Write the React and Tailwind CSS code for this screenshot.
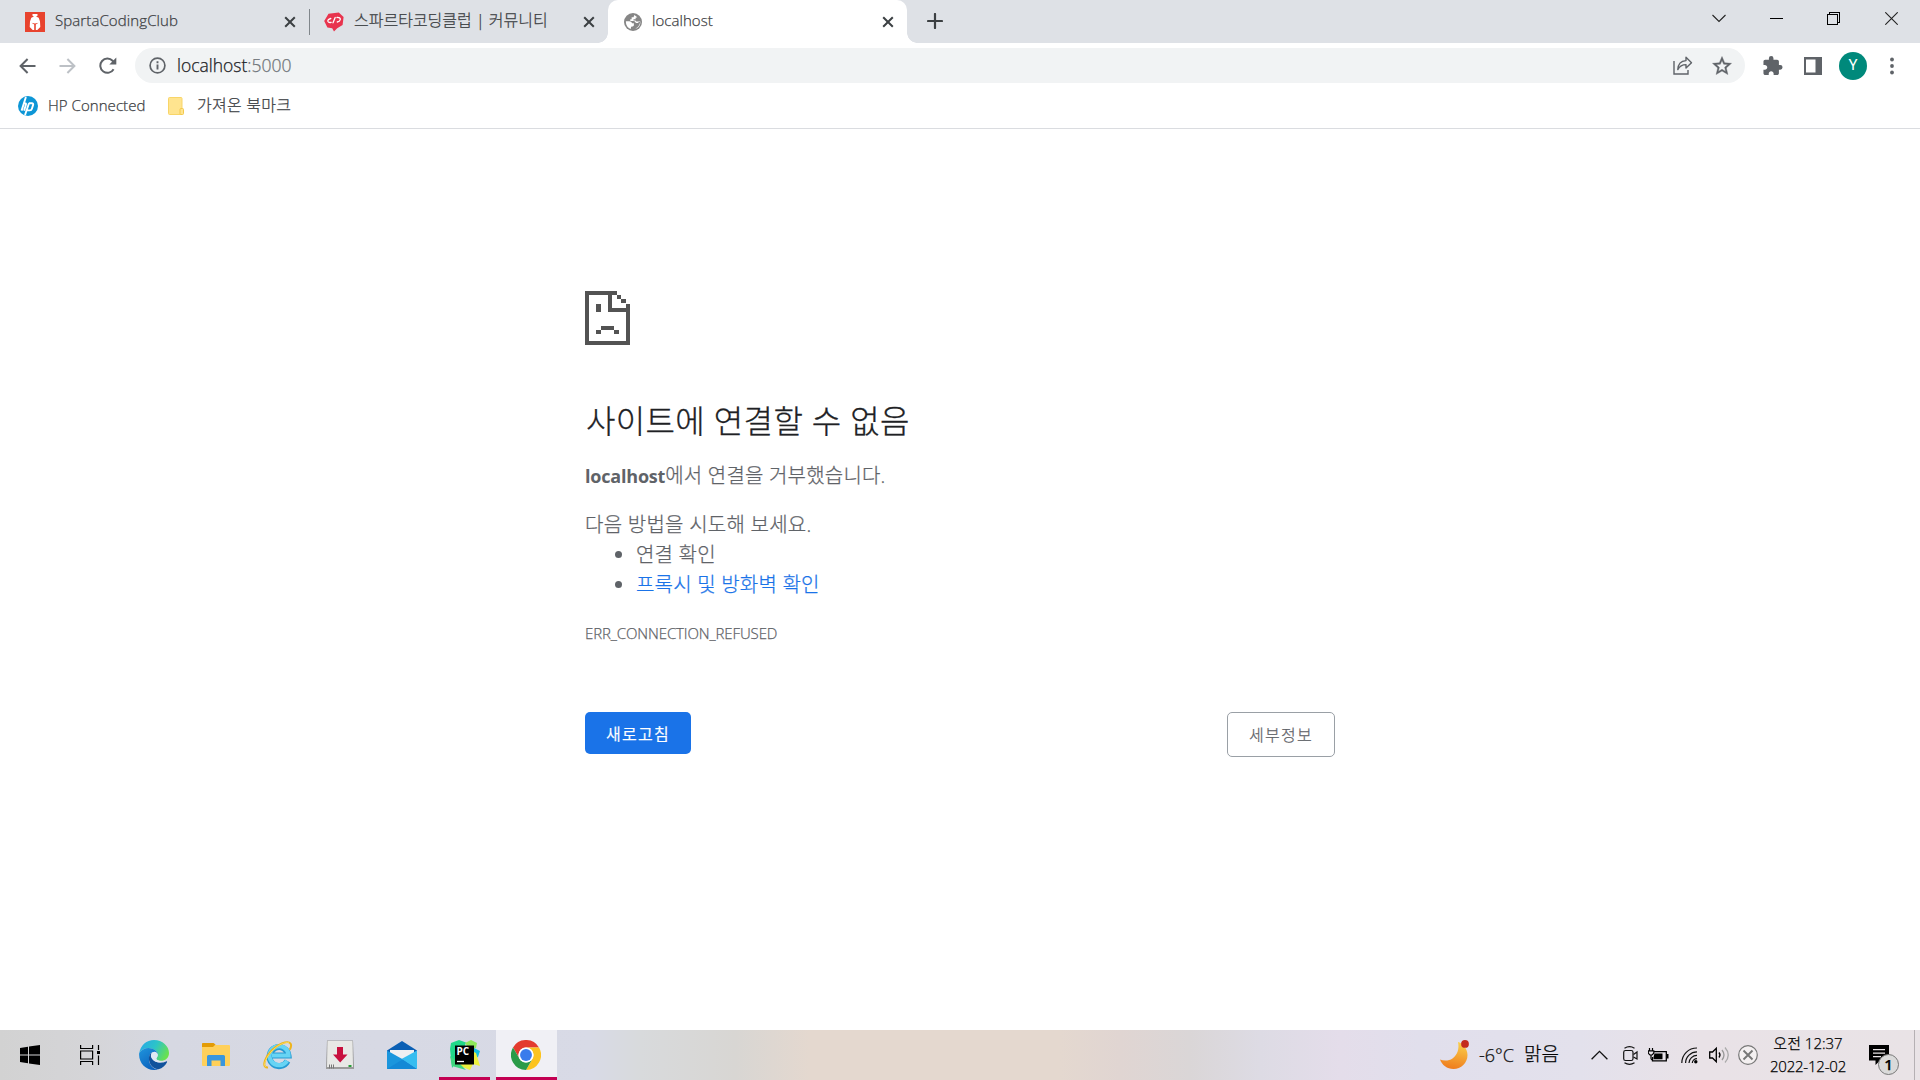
const FONT = 'font-["Open_Sans","Noto_Sans_CJK_KR",sans-serif]';

const CloseX = () => (
  <svg width="12" height="12" viewBox="0 0 12 12" className="shrink-0">
    <path d="M1.2 1.2 10.8 10.8M10.8 1.2 1.2 10.8" stroke="#3c4043" strokeWidth="2" />
  </svg>
);

const SpartaIcon = () => (
  <svg width="20" height="20" viewBox="0 0 20 20" className="shrink-0">
    <rect width="20" height="20" fill="#e8432e" />
    <path d="M7.500 2h5v1.800L11 4.500l2.700 1.300L15 9.500l.3 5.500-3 3h-1.500v-5.500l2.700-1.800-3.500.8-3.500-.8 2.700 1.800V18H7.700l-3-3L5 9.500l1.300-3.700L9 4.500l-1.500-.7z" fill="#fff" />
  </svg>
);

const CommunityIcon = () => (
  <svg width="20" height="20" viewBox="0 0 20 20" className="shrink-0">
    <path d="M4.500 1.800 14.800.4 19.600 5l-1 8-5.400 3.200L10 19.600l-1.800-3.400-4.800-.8L.2 9z" fill="#e8344e" />
    <path d="M6.800 6.500Q3.200 7.500 4 9.500q.8 1.500 3.200.8M13 5.500q3.500-.3 3.300 2-.3 2-3 2.500M11.200 5.500 9 10.800" stroke="#fff" strokeWidth="1.300" fill="none" strokeLinecap="round" />
  </svg>
);

const Globe = () => (
  <svg width="18" height="18" viewBox="2 2 20 20" className="shrink-0">
    <circle cx="12" cy="12" r="10" fill="#868686" />
    <path d="M4.100 11.200h3.600c1.700 0 3 .8 3.200 2.300H13v1.800c0 .8-.6 1.500-1.500 1.600l-1.600.4-.4 2.500C6.600 18.800 4 16 4.100 11.200zM13.500 4.200 12.600 6.800H10.500v2.200H9v2h3.500c1.500 0 2 1 2.700 2.200h2.300l1-1.200h1.400c-.3 2.700-1.700 5.200-4.500 6.900l-.5.200.2.500C19 18 20.400 15 20.200 11.500h-4.500l-1-1.200h-2.200V8.900h2.400V7.200l1.900-.4z" fill="#fff" />
  </svg>
);

function Tab({ icon, title, titleClass, closeClass, className }) {
  return (
    <div className={"flex h-[43px] items-center " + className}>
      {icon}
      <span className={"whitespace-nowrap text-[#3c4043] " + titleClass}>{title}</span>
      <span className={"ml-auto flex " + closeClass}><CloseX /></span>
    </div>
  );
}

function TabStrip() {
  return (
    <div className="flex h-[43px] bg-[#dee1e6]">
      <Tab icon={<SpartaIcon />} title="SpartaCodingClub" className="w-[309px] pl-[25px]"
        titleClass="ml-[10px] -mt-[2px] text-[15px] tracking-[0.1px]" closeClass="mr-[13px]" />
      <div className="mt-[9px] h-[26px] w-px bg-[#80868b]" />
      <Tab icon={<CommunityIcon />} title="스파르타코딩클럽 | 커뮤니티" className="w-[298px] pl-[14px]"
        titleClass="ml-[10px] -mt-[4px] text-[16px]" closeClass="mr-[13px]" />
      <div className="flex w-[299px] bg-[#dee1e6]">
        <div className="relative flex w-full rounded-t-[10px] bg-white">
          <div className="absolute bottom-0 -left-[10px] size-[10px] bg-[radial-gradient(circle_at_0_0,transparent_9.5px,white_10px)]" />
          <div className="absolute -right-[10px] bottom-0 size-[10px] bg-[radial-gradient(circle_at_100%_0,transparent_9.5px,white_10px)]" />
          <Tab icon={<Globe />} title="localhost" className="w-full pl-[16px]"
            titleClass="ml-[10px] -mt-[2px] text-[15px] tracking-[0.05px]" closeClass="mr-[13px]" />
        </div>
      </div>
      <svg width="16" height="16" viewBox="0 0 16 16" className="mt-[13px] ml-[20px]">
        <path d="M8 1v14M1 8h14" stroke="#3c4043" strokeWidth="2.200" strokeLinecap="round" />
      </svg>
      <div className="ml-auto flex">
        <svg width="14" height="9" viewBox="0 0 14 9" className="mt-[14px] mr-[44px]">
          <path d="M.5 1 7 7.500 13.500 1" stroke="#222" strokeWidth="1.100" fill="none" />
        </svg>
        <div className="mt-[18px] mr-[44px] h-px w-[13px] bg-black" />
        <svg width="13" height="13" viewBox="0 0 13 13" className="mt-[12px] mr-[45px]" shapeRendering="crispEdges">
          <path d="M.5 2.500h10v10h-10zM2.500 2.500v-2h10v10h-2" stroke="#000" fill="none" />
        </svg>
        <svg width="13" height="13" viewBox="0 0 13 13" className="mt-[12px] mr-[22px]">
          <path d="M.3.3 12.700 12.700M12.700.3.3 12.700" stroke="#222" strokeWidth="1.100" />
        </svg>
      </div>
    </div>
  );
}

function Toolbar() {
  return (
    <div className="flex h-[45px] items-center bg-white pl-[19px]">
      <svg width="17" height="16" viewBox="0 0 17 16">
        <path d="M16.500 8H2M8.600 1 1.600 8l7 7" stroke="#5f6368" strokeWidth="2" fill="none" />
      </svg>
      <svg width="17" height="16" viewBox="0 0 17 16" className="ml-[23px]">
        <path d="M.5 8H15M8.400 1l7 7-7 7" stroke="#bdc1c6" strokeWidth="2" fill="none" />
      </svg>
      <svg width="18" height="17" viewBox="0 0 18 17" className="ml-[23px]">
        <path d="M14.600 12.200A7.100 7.100 0 1 1 13.600 3.800L15 5.200" stroke="#5f6368" strokeWidth="2" fill="none" />
        <path d="M17.300.6v7H10.300z" fill="#5f6368" />
      </svg>
      <div className="ml-[18px] flex h-[35px] w-[1610px] items-center rounded-full bg-[#f1f3f4] pr-[13px] pl-[14px]">
        <svg width="17" height="17" viewBox="0 0 17 17">
          <circle cx="8.500" cy="8.500" r="7.400" stroke="#5f6368" strokeWidth="1.700" fill="none" />
          <path d="M8.500 7.400v5M8.500 4.300v1.900" stroke="#5f6368" strokeWidth="1.900" />
        </svg>
        <span className="ml-[11px] text-[17.5px] text-[#202124]">localhost<span className="text-[#70757a]">:5000</span></span>
        <svg width="20" height="19" viewBox="0 0 20 19" className="ml-auto">
          <path d="M1 5v13h14v-4" stroke="#5f6368" strokeWidth="1.400" fill="none" />
          <path d="M4.800 13.600C5 8.500 8 5 13 4.600V1.200l5.500 5.500-5.500 5.400V8.600c-3.800 0-6.500 1.800-8.200 5z" stroke="#5f6368" strokeWidth="1.400" fill="none" strokeLinejoin="round" />
        </svg>
        <svg width="20" height="20" viewBox="1.500 1.500 21 21" className="ml-[19px]">
          <path d="M22 9.240l-7.190-.62L12 2 9.190 8.630 2 9.240l5.460 4.730L5.820 21 12 17.270 18.180 21l-1.630-7.030L22 9.240zM12 15.400l-3.760 2.270 1-4.280-3.320-2.880 4.380-.38L12 6.100l1.710 4.040 4.380.38-3.320 2.880 1 4.280L12 15.400z" fill="#5f6368" stroke="#5f6368" strokeWidth=".4" />
        </svg>
      </div>
      <svg width="20" height="20" viewBox="1.500 1 22 22" className="ml-[18px]">
        <path d="M20.500 11H19V7c0-1.100-.9-2-2-2h-4V3.500a2.500 2.500 0 0 0-5 0V5H4c-1.100 0-1.990.9-1.990 2v3.800H3.500c1.490 0 2.700 1.210 2.700 2.700s-1.210 2.700-2.700 2.700H2V20c0 1.100.9 2 2 2h3.800v-1.500c0-1.490 1.210-2.700 2.700-2.700s2.700 1.210 2.700 2.700V22H17c1.100 0 2-.9 2-2v-4h1.500a2.500 2.500 0 0 0 0-5z" fill="#5f6368" />
      </svg>
      <svg width="18" height="18" viewBox="0 0 18 18" className="ml-[21px]">
        <path d="M0 0h18v18H0zM2 2.500v13h9.500v-13z" fill="#5f6368" fillRule="evenodd" />
      </svg>
      <div className="ml-[17px] flex size-[28px] items-center justify-center rounded-full bg-[#00897b] font-[Roboto] text-[15px] font-normal text-white [-webkit-text-stroke:0px]">Y</div>
      <svg width="4" height="18" viewBox="0 0 4 18" className="ml-[23px]">
        <circle cx="2" cy="2.500" r="1.900" fill="#5f6368" /><circle cx="2" cy="9" r="1.900" fill="#5f6368" /><circle cx="2" cy="15.500" r="1.900" fill="#5f6368" />
      </svg>
    </div>
  );
}

function Bookmarks() {
  return (
    <div className="flex h-[41px] items-center border-b border-[#dadce0] bg-white pb-[5px] pl-[18px] text-[#3c4043]">
      <svg width="20" height="20" viewBox="0 0 20 20">
        <circle cx="10" cy="10" r="10" fill="#0d96d6" />
        <path d="M7.900 1 3.600 14.600M5.300 7.200H6.900Q8.400 7.200 7.900 8.800L6.100 14.600M11 7.300 7 19M10.800 7.300h3.100q1.700 0 1.200 1.600l-1.200 3.900q-.5 1.600-2 1.600H9.200" stroke="#fff" strokeWidth="1.900" fill="none" />
      </svg>
      <span className="ml-[10px] w-[100px] text-[15px] tracking-[0.05px] whitespace-nowrap">HP Connected</span>
      <svg width="16" height="18" viewBox="0 0 16 18" className="ml-[20px]">
        <rect x=".5" y=".5" width="13.500" height="17" rx="1" fill="#ffe48f" stroke="#f8d568" />
        <rect x="12" y="11.500" width="3.500" height="6" rx="1" fill="#ffe48f" stroke="#f3c94d" />
      </svg>
      <span className="-mt-px ml-[13px] text-[16px] tracking-[0.25px]">가져온 북마크</span>
    </div>
  );
}

function ErrorPage() {
  return (
    <main className="h-[901px] bg-white pt-[162px]">
      <div className="mx-auto w-[750px] text-[#5f6368]">
        <svg width="45" height="54" viewBox="0 0 45 54" shapeRendering="crispEdges" fill="#535353">
          <path d="M0 0h32v4H4v46h37V21H23V4h4v13h14v-4h4v41H0z" />
          <path d="M32 4h4v4h-4zM36 8h5v4h-5zM11 13h5v8h-5zM16 35h13v4H16zM11 39h5v4h-5zM29 39h5v4h-5z" />
        </svg>
        <h1 className="mt-[56px] ml-px h-[40px] text-[32px] leading-[40px] font-light tracking-[0.35px] text-[#202124] [-webkit-text-stroke:0.3px]">사이트에 연결할 수 없음</h1>
        <p className="mt-[20px] flex h-[30px] text-[20px] leading-[30px] tracking-[0.2px]">
          <strong className="text-[18px] font-bold tracking-[-0.2px] [-webkit-text-stroke:0px]">localhost</strong>
          <span>에서 연결을 거부했습니다.</span>
        </p>
        <p className="mt-[19px] h-[30px] text-[20px] leading-[30px] tracking-[0.25px]">다음 방법을 시도해 보세요.</p>
        <ul className="list-disc pl-[51px] text-[20px] leading-[30px] tracking-[0.2px]">
          <li>연결 확인</li>
          <li><a className="text-[#1a73e8]">프록시 및 방화벽 확인</a></li>
        </ul>
        <p className="mt-[18px] text-[15px] leading-[30px] tracking-[-0.12px]">ERR_CONNECTION_REFUSED</p>
        <div className="mt-[64px] flex items-start justify-between">
          <button className="h-[42px] w-[106px] rounded-[5px] bg-[#1a73e8] pt-[2px] text-[16px] font-[350] tracking-[1.3px] text-white">새로고침</button>
          <button className="h-[45px] w-[108px] rounded-[5px] border border-[#9aa0a6] text-[16px] tracking-[1.3px]">세부정보</button>
        </div>
      </div>
    </main>
  );
}

const WindowsLogo = () => (
  <svg width="20" height="20" viewBox="0 0 20 20">
    <path d="M0 2.900 8 1.800V9.500H0zM9 1.600 20 0v9.500H9zM0 10.500h8v7.700L0 17.100zM9 10.500h11V20L9 18.400z" />
  </svg>
);

const TaskView = () => (
  <svg width="20" height="20" viewBox="0 0 20 20" fill="none" stroke="#000" strokeWidth="1.200">
    <path d="M.6 0v3.500h12V0M.6 20v-3.500h12V20M.6 6h12v8h-12zM18.500 0v5M18.500 10.500V20" />
    <path d="M17 6h3v3h-3z" fill="#000" stroke="none" />
  </svg>
);

const Edge = () => (
  <svg width="30" height="30" viewBox="0 0 30 30">
    <defs>
      <linearGradient id="e1" x1="0" y1=".2" x2="1" y2=".6"><stop offset="0" stopColor="#29a9e6" /><stop offset=".5" stopColor="#2cc4c8" /><stop offset="1" stopColor="#6be24b" /></linearGradient>
      <linearGradient id="e2" x1="0" y1="0" x2=".6" y2="1"><stop offset="0" stopColor="#1f95dd" /><stop offset="1" stopColor="#0c62bd" /></linearGradient>
    </defs>
    <path d="M.3 13C1.500 5.300 7.600 0 15 0c8.500 0 15 6.200 15 13 0 5-3.800 7.800-8 7.800-3.500 0-5-1.200-4.700-2.300.5-1 1.500-1.700 1.500-3.700C18.800 11 14 8 9.500 8 5.500 8 2 10 .3 13z" fill="url(#e1)" />
    <path d="M.2 13C2 10 5.500 8 9.500 8c5 0 9.100 3 9.300 6.500C18 12.800 16.500 12 15 12c-3 0-5 3-5 7 0 6 4 10 9 10.300C17.500 30 16 30 15 30 6 30-.8 22 .2 13z" fill="url(#e2)" />
    <path d="M12.500 13c-2 1-3 4-2.500 7 1 6 5 9 9.500 9.300 4-1 7-3.700 8.500-7 .3-.8-.2-1.200-.9-.9C20 24.700 10.500 21 12.500 13z" fill="#10529c" />
    <path d="M14.800 11.900c-3 .6-3.600 4-2 6.600 2.200 3.700 8 4.800 13.200 3.100-1.500-.2-6.400-.4-8.300-2.200-1-1 .9-1.900 1.100-4.300 0-1.900-1.900-3.600-4-3.200z" fill="#dfe8f4" />
  </svg>
);

const Explorer = () => (
  <svg width="28" height="24" viewBox="0 0 28 24">
    <path d="M0 1q0-1 1-1h10.500l2 2H27q1 0 1 1v19q0 1-1 1H1q-1 0-1-1z" fill="#ffd05a" />
    <path d="M0 1q0-1 1-1h10.500l2 1.500-2.500 2.500H0z" fill="#e39b05" />
    <path d="M5 23V13.500q0-1.500 1.500-1.500h15q1.500 0 1.500 1.500V23h-4.500v-5.500h-9V23z" fill="#3a96dd" />
  </svg>
);

const InternetExplorer = () => (
  <svg width="30" height="30" viewBox="0 0 30 30" fill="none">
    <path d="M24.500 21A9.500 9.500 0 1 1 25.500 15.500H9" stroke="#279bd3" strokeWidth="6" />
    <path d="M24 20.800A9.500 9.500 0 1 1 25.500 15.500H9" stroke="#67d4f4" strokeWidth="4.200" />
    <path d="M5 27.500C-1 28 .7 20 7 12.500 14 4 25 0 27.500 3.500c1 1.500.5 4-.8 6.200" stroke="#eeb41c" strokeWidth="2" />
    <path d="M3 27C0 26 2 19 8 12 14 5 22.500 1.500 26 2.800" stroke="#fbdc5c" strokeWidth="1" />
  </svg>
);

const Installer = () => (
  <svg width="28" height="30" viewBox="0 0 28 30">
    <path d="M1 .5h26l1 26.500v2H0v-2z" fill="#9b9b9b" />
    <path d="M1.500 1h25l.5 26H1z" fill="#e8e8e6" />
    <path d="M11 7h6v7.500h4.500L14.200 22.500 7 14.500h4z" fill="#c8103e" />
    <path d="M3.500 24.500v4M5.500 24.500v4M7.500 24.500v4" stroke="#777" />
    <rect x="22.500" y="25" width="3" height="2" fill="#2a9d3a" />
  </svg>
);

const Mail = () => (
  <svg width="30" height="28" viewBox="0 0 30 28">
    <path d="M0 9.500 15 0l15 9.500v4H0z" fill="#0a5fb4" />
    <path d="M3 9h24v11H3z" fill="#f0f0f2" />
    <path d="M0 9.500 17 19l13 9H0z" fill="#1b96dd" />
    <path d="M30 9.500V28L14.500 18z" fill="#37bdf0" />
    <path d="M0 28 15.500 18.500 30 28z" fill="#1489d6" />
  </svg>
);

const PyCharm = () => (
  <svg width="30" height="30" viewBox="0 0 30 30">
    <path d="M9 0 16 2.500 12 14 2 28 0 9 1 3z" fill="#21d789" />
    <path d="M15 3 21 0 27 3 26 8 20 10z" fill="#8ee85a" />
    <path d="M24 8 30 11 28 17 22 20z" fill="#15bfe3" />
    <path d="M20 10 26 13 30 26 23 24 20 30 10 26z" fill="#ecf03e" />
    <path d="M0 16 8 22 16 30 2 26z" fill="#3fd67f" />
    <rect x="5" y="5.500" width="19" height="19" fill="#000" />
    <text x="6.500" y="14.800" fontFamily="Open Sans" fontWeight="700" fontSize="10" fill="#fff">PC</text>
    <path d="M7 21.500h7" stroke="#fff" strokeWidth="1.300" />
  </svg>
);

const Chrome = () => (
  <svg width="30" height="30" viewBox="0 0 48 48">
    <path d="M3.200 12A24 24 0 0 1 44.800 12H24A12 12 0 0 0 13.600 30z" fill="#e33b2e" />
    <path d="M44.800 12A24 24 0 0 1 24 48L34.400 30A12 12 0 0 0 24 12z" fill="#fcc31e" />
    <path d="M3.200 12A24 24 0 0 0 24 48L34.400 30A12 12 0 0 1 13.600 30z" fill="#2a9b48" />
    <circle cx="24" cy="24" r="12" fill="#fff" />
    <circle cx="24" cy="24" r="9.500" fill="#3a7cec" />
  </svg>
);

const PINNED = [Edge, Explorer, InternetExplorer, Installer, Mail];

function Tray() {
  return (
    <div className="ml-auto flex h-[50px] items-center">
      <svg width="29" height="30" viewBox="0 0 29 30">
        <defs><linearGradient id="moon" x1=".7" y1="0" x2=".5" y2="1"><stop offset="0" stopColor="#fad04a" /><stop offset="1" stopColor="#ef7d1e" /></linearGradient></defs>
        <path d="M18 2c4 1 9.500 6 9.500 13 0 8-6.500 14-14 14C7 29 2 25 0 19.500c3.500 1.500 9 1.500 12.500-1C17.500 15 19.500 8.500 18 2z" fill="url(#moon)" />
        <circle cx="25" cy="3.900" r="3.900" fill="#c42b1c" />
      </svg>
      <span className="ml-[10px] w-[45px] text-[18px] whitespace-nowrap text-[#111]">-6°C</span>
      <span className="-mt-px w-[37px] text-[19px] text-black">맑음</span>
      <svg width="17" height="10" viewBox="0 0 17 10" className="ml-[30px]">
        <path d="M.6 9.200 8.500 1.300l7.900 7.900" stroke="#111" strokeWidth="1.300" fill="none" />
      </svg>
      <svg width="15" height="19" viewBox="0 0 15 19" className="ml-[15px]" fill="none" stroke="#111" strokeWidth="1.200">
        <rect x=".7" y="4.500" width="9.300" height="10" rx="1.800" />
        <path d="M10.500 8.500 14 6v7l-3.500-2M1.500 2.200Q6.500-.8 11.500 2.200M1.500 16.800q5 3 10 0" />
      </svg>
      <svg width="21" height="15" viewBox="0 0 21 15" className="ml-[10px]">
        <path d="M6 3.700h12.300v9.100H4.500V9" fill="none" stroke="#000" strokeWidth="1.300" />
        <path d="M6.500 5.500h8v5.700h-9V9z" fill="#000" /><path d="M19 6h1.500v4.500H19z" />
        <path d="M1.500 0v2.500M4.500 0v2.500M.3 2.800h5.500v2.500L4 7H2L.3 5.300zM3 7v3.500q0 1.500 2 1.500" fill="none" stroke="#000" strokeWidth="1.200" />
      </svg>
      <svg width="17" height="17" viewBox="0 0 17 17" className="ml-[12px]" fill="none" stroke="#111" strokeWidth="1.200">
        <path d="M.8 16C.8 7.500 7.500 1 16 1M4.600 16C4.600 9.800 9.800 4.800 16 4.800M8 16c0-4.200 3.800-7.700 8-7.700M11.300 16c0-2.400 2.300-4.400 4.700-4.400" />
        <circle cx="14.800" cy="14.800" r="1.700" fill="#000" stroke="none" />
      </svg>
      <svg width="21" height="18" viewBox="0 0 21 18" className="ml-[11px]" fill="none" strokeWidth="1.300">
        <path d="M.7 6h2.800L7.300 2.200v13.600L3.500 12H.7z" stroke="#000" />
        <path d="M10 6.500q2 2.500 0 5" stroke="#000" /><path d="M13 4q4 5 0 10" stroke="#999" /><path d="M16 1.500q6.500 7.500 0 15" stroke="#aaa" />
      </svg>
      <svg width="20" height="20" viewBox="0 0 20 20" className="ml-[8px]" fill="none">
        <circle cx="10" cy="10" r="9.300" stroke="#777" strokeWidth="1.200" fill="#f4f0f1" />
        <path d="M5.500 5.500l9 9M14.500 5.500l-9 9" stroke="#777" strokeWidth="1.900" />
      </svg>
      <div className="ml-[8px] flex w-[84px] flex-col items-center text-[15px] leading-[23px] text-black">
        <span className="-mt-px">오전 12:37</span>
        <span className="tracking-[-0.2px]">2022-12-02</span>
      </div>
      <div className="relative ml-[19px] h-[20px] w-[20px]">
        <svg width="20" height="20" viewBox="0 0 20 20">
          <path d="M0 0h20v15.500H11L6.500 20v-4.500H0z" /><path d="M4 4.700h12M4 8.200h12M4 11.700h8" stroke="#e8e3e5" strokeWidth="1.300" />
        </svg>
        <div className="absolute top-[9px] left-[9px] flex size-[21px] items-center justify-center rounded-full border border-[#777] bg-[#dadada] text-[15px] font-semibold text-black">1</div>
      </div>
      <div className="ml-[25px] h-[50px] w-px bg-[#b5b0b3]" />
      <div className="w-[5px]" />
    </div>
  );
}

function Taskbar() {
  return (
    <div className="flex h-[50px] items-center bg-[linear-gradient(90deg,#d2d2d2_0px,#d5d5d8_90px,#d6d8e2_170px,#d8dae6_590px,#d8dadc_640px,#d8d6d3_735px,#e4d8cf_810px,#e4d8cf_1060px,#e0d5d2_1120px,#dad6d7_1190px,#dddbe4_1260px,#e4ddea_1340px,#e1dfec_1420px,#e3e1ec_1580px,#e9e2e7_1700px,#e9e3e6_1920px)]">
      <div className="flex w-[60px] justify-center"><WindowsLogo /></div>
      <div className="mr-[3px] flex w-[60px] justify-center"><TaskView /></div>
      {PINNED.map((Icon, i) => (
        <div key={i} className="flex w-[62px] justify-center"><Icon /></div>
      ))}
      <div className="mx-[6px] flex h-[50px] w-[51px] items-center justify-center border-b-[3px] border-[#c30052] pt-[3px] [-webkit-text-stroke:0px]"><PyCharm /></div>
      <div className="flex h-[50px] w-[61px] items-center justify-center border-b-[3px] border-[#c30052] bg-[#f0f0f5] pt-[3px] pr-px"><Chrome /></div>
      <Tray />
    </div>
  );
}

export default function App() {
  return (
    <div className={"h-[1080px] w-[1920px] overflow-hidden bg-white font-light [-webkit-text-stroke:0.25px] " + FONT}>
      <TabStrip />
      <Toolbar />
      <Bookmarks />
      <ErrorPage />
      <Taskbar />
    </div>
  );
}
